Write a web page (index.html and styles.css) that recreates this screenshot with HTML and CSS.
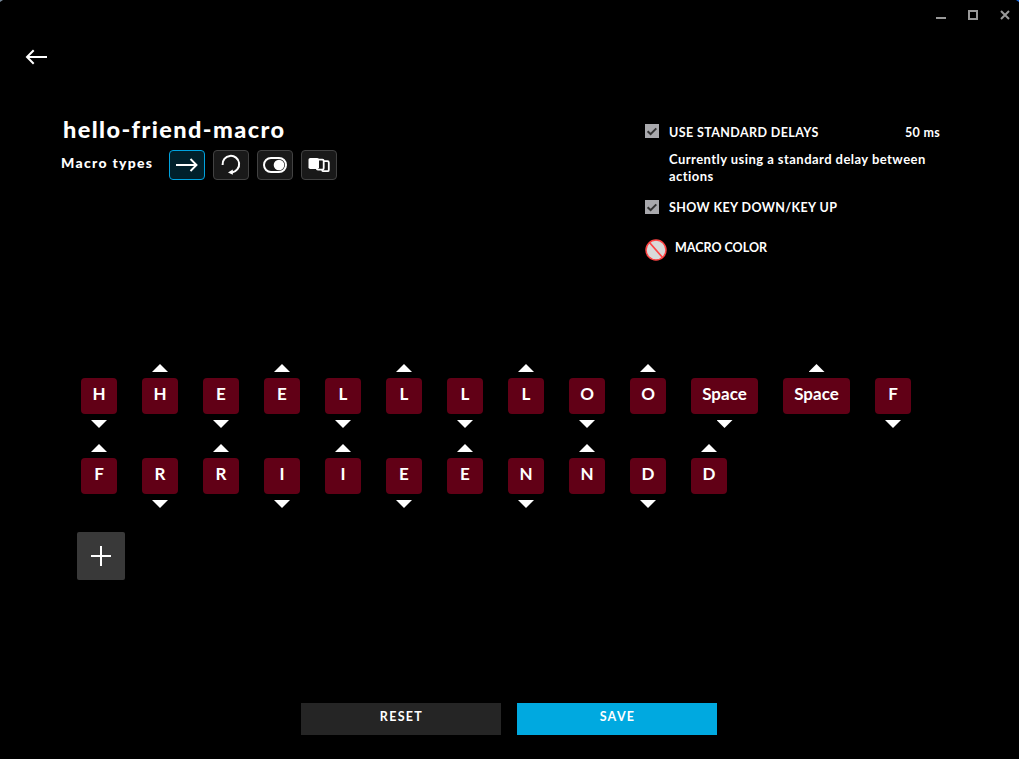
FILE: index.html
```html
<!DOCTYPE html>
<html lang="en">
<head>
<meta charset="utf-8">
<title>Macro editor</title>
<link rel="stylesheet" href="styles.css">
</head>
<body>
<div class="app">
  <header class="titlebar">
    <svg width="10" height="11" viewBox="0 0 10 11"><path d="M0 9h10v2H0z" fill="#999"/></svg>
    <svg width="10" height="10" viewBox="0 0 10 10"><path d="M1 1h8v8H1z" fill="none" stroke="#999" stroke-width="2"/></svg>
    <svg width="10" height="10" viewBox="0 0 10 10"><path d="M1 1l8 8M9 1l-8 8" stroke="#999" stroke-width="2"/></svg>
  </header>
  <nav class="back">
    <svg width="24" height="18" viewBox="0 0 24 18"><path d="M3 9h20M9.700 2.300L3 9l6.700 6.700" fill="none" stroke="#fff" stroke-width="2"/></svg>
  </nav>
  <section class="top">
    <div class="info">
      <h1 class="name"><span>hello-friend-macro</span></h1>
      <div class="types">
        <span class="types-label">Macro types</span>
        <button class="type active"><svg width="34" height="28" viewBox="0 0 34 28"><path d="M6 14h20M20.500 8l6 6-6 6" fill="none" stroke="#fff" stroke-width="1.900"/></svg></button>
        <button class="type"><svg width="34" height="28" viewBox="0 0 34 28"><path d="M8.600 14a8.300 8.300 0 1 1 9.400 7.400" fill="none" stroke="#fff" stroke-width="2"/><path d="M14 21.600l4.800-3v5.200z" fill="#fff"/></svg></button>
        <button class="type"><svg width="34" height="28" viewBox="0 0 34 28"><rect x="6" y="7" width="22" height="14" rx="7" fill="none" stroke="#fff" stroke-width="2"/><circle cx="21" cy="14" r="5.300" fill="#fff"/></svg></button>
        <button class="type"><svg width="34" height="28" viewBox="0 0 34 28"><rect x="20.200" y="10.200" width="6.600" height="10" rx="1.300" fill="none" stroke="#fff" stroke-width="1.800"/><rect x="14.700" y="8.600" width="7" height="10" rx="1.300" fill="#191919" stroke="#fff" stroke-width="1.800"/><rect x="6.500" y="7" width="10.500" height="11" rx="1.800" fill="#fff"/></svg></button>
      </div>
    </div>
    <div class="options">
      <div class="option">
        <span class="check"><svg width="14" height="14" viewBox="0 0 14 14"><path d="M2.600 7.300l3 2.800 5.700-5.700" fill="none" stroke="#333" stroke-width="2"/></svg></span>
        <span class="opt-label delays">USE STANDARD DELAYS</span>
        <span class="ms">50 ms</span>
      </div>
      <p class="hint"><span class="hint-a">Currently using a standard delay between</span><br><span class="hint-b">actions</span></p>
      <div class="option">
        <span class="check"><svg width="14" height="14" viewBox="0 0 14 14"><path d="M2.600 7.300l3 2.800 5.700-5.700" fill="none" stroke="#333" stroke-width="2"/></svg></span>
        <span class="opt-label updown">SHOW KEY DOWN/KEY UP</span>
      </div>
      <div class="color">
        <svg width="22" height="22" viewBox="0 0 22 22"><circle cx="11" cy="11" r="10" fill="#d9d9d9" stroke="#f44" stroke-width="1.500"/><path d="M4.500 3.500l13 15" stroke="#f44" stroke-width="1.700"/></svg>
        <span class="color-label">MACRO COLOR</span>
      </div>
    </div>
  </section>
  <section class="keys">
    <div class="row">
      <div class="key down"><b>H</b></div><div class="key up"><b>H</b></div>
      <div class="key down"><b>E</b></div><div class="key up"><b>E</b></div>
      <div class="key down"><b>L</b></div><div class="key up"><b>L</b></div>
      <div class="key down"><b>L</b></div><div class="key up"><b>L</b></div>
      <div class="key down"><b>O</b></div><div class="key up"><b>O</b></div>
      <div class="key down wide"><b>Space</b></div><div class="key up wide"><b>Space</b></div>
      <div class="key down"><b>F</b></div>
    </div>
    <div class="row">
      <div class="key up"><b>F</b></div>
      <div class="key down"><b>R</b></div><div class="key up"><b>R</b></div>
      <div class="key down"><b>I</b></div><div class="key up"><b>I</b></div>
      <div class="key down"><b>E</b></div><div class="key up"><b>E</b></div>
      <div class="key down"><b>N</b></div><div class="key up"><b>N</b></div>
      <div class="key down"><b>D</b></div><div class="key up"><b>D</b></div>
    </div>
    <button class="add"><svg width="20" height="20" viewBox="0 0 20 20"><path d="M10 0v20M0 10h20" stroke="#fff" stroke-width="2"/></svg></button>
  </section>
  <footer class="actions">
    <button class="btn reset"><span>RESET</span></button>
    <button class="btn save"><span>SAVE</span></button>
  </footer>
  <i class="corner left"></i><i class="corner right"></i>
</div>
</body>
</html>
```
FILE: styles.css
```css
* { box-sizing: border-box; margin: 0; padding: 0; }
body { background: #000; color: #fff; font-family: Lato, "Open Sans", sans-serif; font-weight: 700; overflow: hidden; }
svg { display: block; flex: none; }
button { border: 0; color: inherit; font: inherit; display: flex; align-items: center; justify-content: center; }
.app { position: relative; width: 1019px; height: 759px; display: flex; flex-direction: column; }
.titlebar { height: 30px; padding: 10px 9px 0 0; display: flex; justify-content: flex-end; align-items: flex-start; gap: 22px; }
.titlebar svg:first-child { margin-top: -2px; }
.back { height: 86px; padding: 18px 0 0 24px; }
.top { height: 248px; display: flex; }
.info { width: 645px; padding-left: 61px; }
.name { height: 34px; padding-left: 2px; font-size: 23.5px; line-height: 27px; font-weight: 900; letter-spacing: 1.4px; white-space: nowrap; }
.types { display: flex; gap: 8px; }
.types-label { width: 100px; font-size: 14px; line-height: 26px; letter-spacing: 1.3px; white-space: nowrap; font-weight: 900; }
.type { width: 36px; height: 30px; background: #191919; border: 1px solid #424242; border-radius: 4px; }
.type.active { background: #00202b; border-color: #00a3df; }
.options { width: 296px; padding-top: 8px; }
.option { display: flex; height: 18px; }
.check { width: 14px; height: 14px; background: #a9a9ad; margin-right: 10px; flex: none; }
.opt-label, .ms, .color-label { font-size: 12.5px; line-height: 17px; white-space: nowrap; }
.opt-label { letter-spacing: .4px; }
.ms { margin-left: auto; letter-spacing: .3px; padding-right: 1px; }
.updown { line-height: 16px; }
.hint { height: 58px; padding: 9px 0 0 24px; font-size: 13px; line-height: 17px; letter-spacing: .45px; white-space: nowrap; }
.color { display: flex; gap: 8px; margin-top: 21px; }
.color-label { line-height: 17px; }
.keys { height: 339px; padding-left: 77px; }
.row { display: flex; gap: 25px; height: 80px; padding-left: 4px; }
.key { width: 36px; height: 64px; display: flex; flex-direction: column; align-items: center; padding-top: 14px; }
.key.wide { width: 67px; }
.key.up { padding-top: 0; }
.key b { width: 100%; height: 36px; background: #610016; border-radius: 4px; text-align: center; font-size: 17px; line-height: 31px; font-weight: 700; }
.key::before, .key::after { width: 16px; height: 8px; background: #fff; }
.key.up::before { content: ""; margin-bottom: 6px; clip-path: polygon(50% 0, 100% 100%, 0 100%); }
.key.down::after { content: ""; margin-top: 6px; clip-path: polygon(0 0, 100% 0, 50% 100%); }
.add { width: 48px; height: 48px; background: #393939; border-radius: 2px; margin-top: 8px; }
.actions { display: flex; gap: 16px; padding-left: 301px; }
.btn { width: 200px; height: 32px; font-size: 12.5px; line-height: 28px; letter-spacing: 1.3px; font-weight: 700; align-items: flex-start; padding-left: 1px; }
.reset { background: #252525; }
.save { background: #00a9e0; }
.corner { position: absolute; top: 0; width: 3px; height: 2px; }
.left { left: 0; background: #778899; clip-path: polygon(0 0, 100% 0, 0 100%); }
.right { right: 0; background: #1769e0; clip-path: polygon(0 0, 100% 0, 100% 100%); }
```
